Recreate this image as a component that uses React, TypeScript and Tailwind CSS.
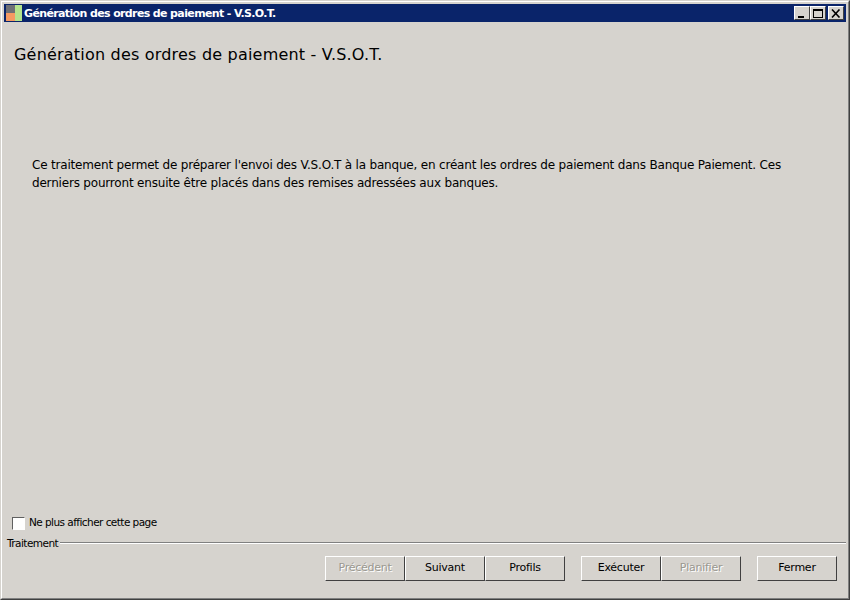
const font = "[font-family:'DejaVu_Sans',sans-serif]";

function WinButton({ children, className = "" }: { children: React.ReactNode; className?: string }) {
  return (
    <div
      className={`w-4 h-[14px] bg-[#d6d3ce] border border-t-white border-l-white border-r-[#404040] border-b-[#404040] flex items-center justify-center ${className}`}
    >
      {children}
    </div>
  );
}

function Btn({ label, disabled, className = "" }: { label: string; disabled?: boolean; className?: string }) {
  return (
    <button
      className={`h-[25px] w-20 flex items-center justify-center bg-[#d6d3ce] border border-t-white border-l-white border-r-[#404040] border-b-[#404040] text-[11px] tracking-[-0.25px] ${
        disabled ? "text-[#9a9890] [text-shadow:1px_1px_0_#ffffff]" : "text-black"
      } ${className}`}
    >
      {label}
    </button>
  );
}

export default function App() {
  return (
    <div className={`w-[850px] h-[600px] bg-[#d6d3ce] border border-t-[#d6d3ce] border-l-[#d6d3ce] border-r-[#404040] border-b-[#404040] ${font}`}>
      <div className="w-full h-full border border-t-white border-l-white border-r-[#808080] border-b-[#808080] p-[2px] flex flex-col">
        {/* barre de titre */}
        <div className="h-[18px] bg-[#0a246a] flex items-center shrink-0">
          <svg width="16" height="16" viewBox="0 0 16 16" className="shrink-0 ml-[2px]">
            <rect x="0" y="0" width="9" height="8" fill="#6f7074" />
            <rect x="0" y="8" width="9" height="8" fill="#f59a62" />
            <rect x="9" y="0" width="7" height="16" fill="#b4e48c" />
          </svg>
          <span className="ml-[2px] text-[11px] font-bold text-white tracking-[-0.63px] leading-none">
            Génération des ordres de paiement - V.S.O.T.
          </span>
          <div className="ml-auto mr-[2px] flex items-center">
            <WinButton>
              <div className="w-[6px] h-[2px] bg-black mt-[7px] -ml-[2px]" />
            </WinButton>
            <WinButton>
              <div className="w-[10px] h-[9px] border border-black border-t-2" />
            </WinButton>
            <WinButton className="ml-[2px]">
              <svg width="10" height="9" viewBox="0 0 10 9">
                <path d="M1 0.5 L8.5 8.5 M8.5 0.5 L1 8.5" stroke="#000" strokeWidth="1.6" />
              </svg>
            </WinButton>
          </div>
        </div>

        <h1 className="mt-[23px] ml-[10px] text-[16px] leading-5 text-black tracking-[0.2px]">
          Génération des ordres de paiement - V.S.O.T.
        </h1>

        <p className="mt-[91px] ml-7 w-[770px] text-[12px] leading-[18px] tracking-[-0.19px] text-black">
          Ce traitement permet de préparer l'envoi des V.S.O.T à la banque, en créant les ordres de paiement dans Banque Paiement. Ces derniers pourront ensuite être placés dans des remises adressées aux banques.
        </p>

        <div className="mt-auto ml-2 flex items-center">
          <div className="w-[13px] h-[13px] bg-white border border-t-[#606060] border-l-[#606060] border-r-white border-b-white" />
          <span className="ml-[4px] text-[10.5px] tracking-[-0.55px] text-black">Ne plus afficher cette page</span>
        </div>

        <div className="mt-[6px] ml-[3px] flex items-center h-[12px]">
          <span className="text-[10.5px] tracking-[-0.55px] text-black leading-none">Traitement</span>
          <div className="flex-1 h-[2px] ml-[2px] border-t border-t-[#808080] border-b border-b-white" />
        </div>

        <div className="mt-[7px] mb-[15px] mr-[9px] flex justify-end">
          <Btn label="Précédent" disabled />
          <Btn label="Suivant" />
          <Btn label="Profils" />
          <Btn label="Exécuter" className="ml-4" />
          <Btn label="Planifier" disabled />
          <Btn label="Fermer" className="ml-4" />
        </div>
      </div>
    </div>
  );
}
